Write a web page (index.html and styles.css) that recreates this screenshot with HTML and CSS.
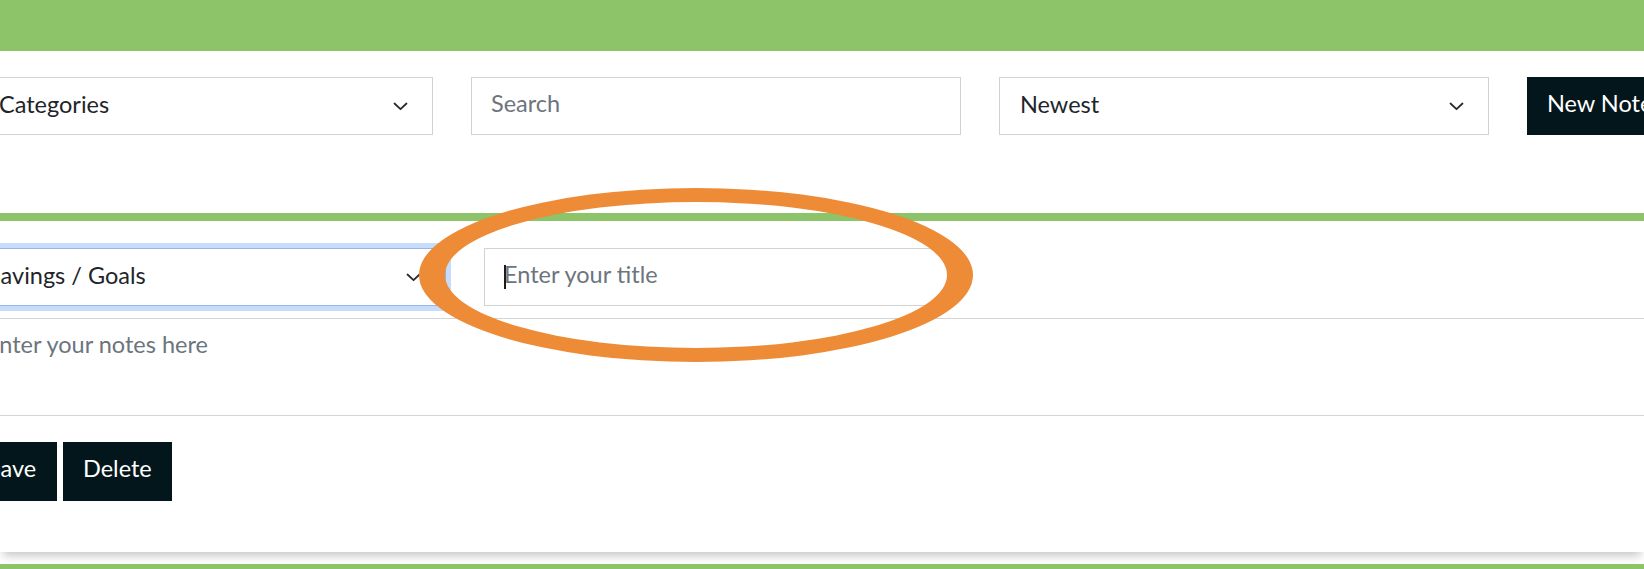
FILE: index.html
```html
<!DOCTYPE html>
<html lang="en">
<head>
<meta charset="utf-8">
<title>Notes</title>
<link rel="stylesheet" href="styles.css">
</head>
<body>
<header class="topbar"></header>

<div class="toolbar">
  <div class="select select-categories" role="combobox">
    <span class="select-label">Categories</span>
    <svg class="chevron" width="15" height="9" viewBox="0 0 15 9"><path d="M1.5 1.5 L7.5 7.2 L13.5 1.5" fill="none" stroke="#2b2b2b" stroke-width="1.8" stroke-linecap="round" stroke-linejoin="round"/></svg>
  </div>
  <input class="field field-search" type="text" placeholder="Search">
  <div class="select select-sort" role="combobox">
    <span class="select-label">Newest</span>
    <svg class="chevron" width="15" height="9" viewBox="0 0 15 9"><path d="M1.5 1.5 L7.5 7.2 L13.5 1.5" fill="none" stroke="#2b2b2b" stroke-width="1.8" stroke-linecap="round" stroke-linejoin="round"/></svg>
  </div>
  <button class="btn btn-new" type="button">New Note</button>
</div>

<section class="note-card">
  <div class="note-head">
    <div class="select select-note is-focused" role="combobox">
      <span class="select-label">Savings / Goals</span>
      <svg class="chevron" width="15" height="9" viewBox="0 0 15 9"><path d="M1.5 1.5 L7.5 7.2 L13.5 1.5" fill="none" stroke="#2b2b2b" stroke-width="1.8" stroke-linecap="round" stroke-linejoin="round"/></svg>
    </div>
    <div class="title-wrap">
      <input class="field field-title" type="text" placeholder="Enter your title">
      <span class="caret"></span>
    </div>
  </div>
  <textarea class="note-body" placeholder="Enter your notes here"></textarea>
  <div class="note-actions">
    <button class="btn btn-save" type="button">Save</button>
    <button class="btn btn-delete" type="button">Delete</button>
  </div>
</section>

<section class="note-card note-card-next"></section>

<svg class="annotation" width="1644" height="569" viewBox="0 0 1644 569">
  <path fill="#ee8b37" fill-rule="evenodd" d="M419 275 a277 87 0 1 0 554 0 a277 87 0 1 0 -554 0 Z M445 275 a251 73 0 1 0 502 0 a251 73 0 1 0 -502 0 Z"/>
</svg>
</body>
</html>
```

FILE: styles.css
```css
html, body {
  margin: 0;
  padding: 0;
  overflow: hidden;
  background: #ffffff;
}

body {
  position: relative;
  width: 1644px;
  height: 569px;
  font-family: Lato, "Open Sans", sans-serif;
  font-size: 23.5px;
  color: #212529;
}

.topbar {
  height: 51px;
  background: #8dc46a;
}

.toolbar {
  display: flex;
  gap: 38px;
  margin-left: -22px;
  padding-top: 26px;
}

.select,
.field,
.btn {
  box-sizing: border-box;
  height: 58px;
  flex-shrink: 0;
  font-family: inherit;
  font-size: 23.5px;
}

.select {
  display: flex;
  align-items: center;
  justify-content: space-between;
  padding: 0 24px 5px 20px;
  border: 1px solid #d2d2d2;
  background: #fff;
  color: #212529;
}

.select-label {
  white-space: nowrap;
}

.chevron {
  display: block;
  flex-shrink: 0;
  margin-top: 6px;
}

.select-categories { width: 455px; }
.select-sort { width: 490px; }

.field {
  border: 1px solid #d2d2d2;
  background: #fff;
  padding: 0 19px 6px;
  color: #212529;
  outline: none;
}

.field::placeholder,
.note-body::placeholder {
  color: #6c757d;
  opacity: 1;
}

.field-search { width: 490px; }

.btn {
  border: 0;
  background: #03161b;
  color: #ffffff;
  padding: 0 20px 6px;
  cursor: pointer;
}

.btn-new {
  width: 160px;
  text-align: left;
}

.note-card {
  margin-top: 78px;
  border-top: 8px solid #8dc46a;
  background: #fff;
  padding-bottom: 51px;
  box-shadow: 0 7px 9px -3px rgba(0, 0, 0, 0.22);
  position: relative;
}

.note-head {
  display: flex;
  gap: 38px;
  margin-left: -33px;
  padding-top: 27px;
}

.select-note {
  width: 479px;
}

.select-note.is-focused {
  border-color: #94b6e8;
  box-shadow: 0 0 0 5px #c7dcfb;
}

.title-wrap {
  position: relative;
  width: 467px;
}

.field-title {
  width: 100%;
}

.caret {
  position: absolute;
  left: 20px;
  top: 17px;
  width: 2px;
  height: 24px;
  background: #1c1c1c;
}

.note-body {
  display: block;
  box-sizing: border-box;
  width: calc(100% + 33px);
  height: 98px;
  margin: 12px 0 0 -33px;
  padding: 11px 19px;
  border: 0;
  border-top: 1px solid #d4d4d4;
  border-bottom: 1px solid #d4d4d4;
  font-family: inherit;
  font-size: 23.5px;
  line-height: 1.2;
  color: #212529;
  resize: none;
  outline: none;
  background: #fff;
}

.note-actions {
  display: flex;
  gap: 6px;
  margin-top: 26px;
  margin-left: -33px;
}

.note-actions .btn {
  height: 59px;
  padding-bottom: 8px;
}

.btn-save {
  width: 90px;
  padding-left: 0;
  padding-right: 0;
  text-align: center;
}

.note-card-next {
  margin-top: 12px;
  height: 200px;
  padding-bottom: 0;
  box-shadow: none;
}

.annotation {
  position: absolute;
  left: 0;
  top: 0;
  pointer-events: none;
}
```
